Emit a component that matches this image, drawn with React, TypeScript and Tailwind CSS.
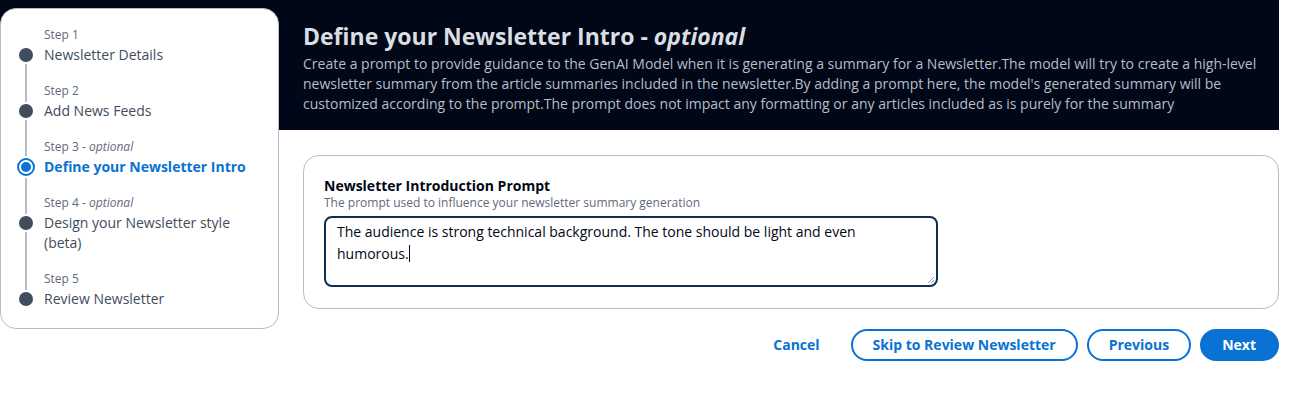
import React from 'react';

const font = { fontFamily: '"Open Sans", "Noto Sans", Arial, sans-serif' };

type Step = { label: string; optional?: boolean; title: string; active?: boolean };

const steps: Step[] = [
  { label: 'Step 1', title: 'Newsletter Details' },
  { label: 'Step 2', title: 'Add News Feeds' },
  { label: 'Step 3', optional: true, title: 'Define your Newsletter Intro', active: true },
  { label: 'Step 4', optional: true, title: 'Design your Newsletter style (beta)' },
  { label: 'Step 5', title: 'Review Newsletter' },
];

function WizardNav() {
  return (
    <nav className="mt-2 w-[279px] shrink-0 self-start rounded-2xl border border-[#b6bec9] bg-white pl-[15px] pr-4 pt-[16px] pb-[19px]">
      {steps.map((s, i) => {
        const first = i === 0;
        const last = i === steps.length - 1;
        return (
          <div key={s.label} className="flex">
            <div className="flex w-5 shrink-0 flex-col items-center">
              <div className={`w-[2px] ${s.active ? 'h-[19px]' : 'h-[21px]'} ${first ? '' : 'bg-[#b6bec9]'}`} />
              {s.active ? (
                <div className="my-[2px] flex h-[18px] w-[18px] items-center justify-center rounded-full border-2 border-[#0972d3]">
                  <div className="h-[10px] w-[10px] rounded-full bg-[#0972d3]" />
                </div>
              ) : (
                <div className="my-[2px] h-[14px] w-[14px] rounded-full bg-[#414d5c]" />
              )}
              <div className={`w-[2px] flex-1 ${last ? '' : 'bg-[#b6bec9]'}`} />
            </div>
            <div className={`pl-2 ${last ? '' : 'pb-4'}`}>
              <div className="text-[12px] leading-5 text-[#5f6b7a]">
                {s.label}
                {s.optional && (
                  <>
                    {' - '}
                    <i>optional</i>
                  </>
                )}
              </div>
              <div
                className={`text-[14px] leading-5 ${
                  s.active ? 'font-bold text-[#0972d3]' : 'text-[#414d5c]'
                }`}
              >
                {s.title}
              </div>
            </div>
          </div>
        );
      })}
    </nav>
  );
}

function Header() {
  return (
    <header className="h-[130px] pt-[21px]">
      <h1 className="text-[23px] font-bold leading-[30px] text-[#dadee3]">
        Define your Newsletter Intro - <i>optional</i>
      </h1>
      <p className="mt-[3px] pr-5 text-[14px] leading-5 text-[#b6bec9]">
        Create a prompt to provide guidance to the GenAI Model when it is generating a summary for a
        Newsletter.The model will try to create a high-level newsletter summary from the article
        summaries included in the newsletter.By adding a prompt here, the model's generated summary
        will be customized according to the prompt.The prompt does not impact any formatting or any
        articles included as is purely for the summary
      </p>
    </header>
  );
}

function PromptForm() {
  return (
    <section className="mt-[25px] rounded-2xl border border-[#b6bec9] bg-white px-5 pt-[21px] pb-[21px]">
      <label className="block text-[14px] font-bold leading-[18px] text-[#000716]">
        Newsletter Introduction Prompt
      </label>
      <div className="text-[12px] leading-4 text-[#5f6b7a]">
        The prompt used to influence your newsletter summary generation
      </div>
      <div className="relative mt-[5px] h-[71px] w-[614px] rounded-lg border-2 border-[#0f2f52] px-[11px] py-1 text-[14px] leading-5 text-[#000716]">
        The audience is strong technical background. The tone should be light and even
        <br />
        humorous.
        <span className="inline-block h-[17px] w-px translate-y-[3px] bg-[#000716]" />
        <svg className="absolute right-[1px] bottom-[1px]" width="8" height="8" viewBox="0 0 8 8">
          <path d="M7 1L1 7M7 4L4 7" stroke="#8d99a8" strokeWidth="1" />
        </svg>
      </div>
    </section>
  );
}

function Actions() {
  return (
    <div className="mt-5 flex justify-end gap-[9px] text-[14px] font-bold leading-5">
      <button className="rounded-full border-2 border-transparent px-5 py-1 text-[#0972d3]">Cancel</button>
      <button className="rounded-full border-2 border-[#0972d3] bg-white px-5 py-1 text-[#0972d3]">
        Skip to Review Newsletter
      </button>
      <button className="rounded-full border-2 border-[#0972d3] bg-white px-5 py-1 text-[#0972d3]">
        Previous
      </button>
      <button className="rounded-full border-2 border-[#0972d3] bg-[#0972d3] pl-5 pr-[21px] py-1 text-white">
        Next
      </button>
    </div>
  );
}

export default function App() {
  return (
    <div className="min-h-[411px] bg-white" style={font}>
      <div className="flex w-[1279px] bg-[linear-gradient(#000716_130px,#ffffff_130px)]">
        <WizardNav />
        <main className="flex-1 pl-6">
          <Header />
          <PromptForm />
          <Actions />
        </main>
      </div>
    </div>
  );
}
